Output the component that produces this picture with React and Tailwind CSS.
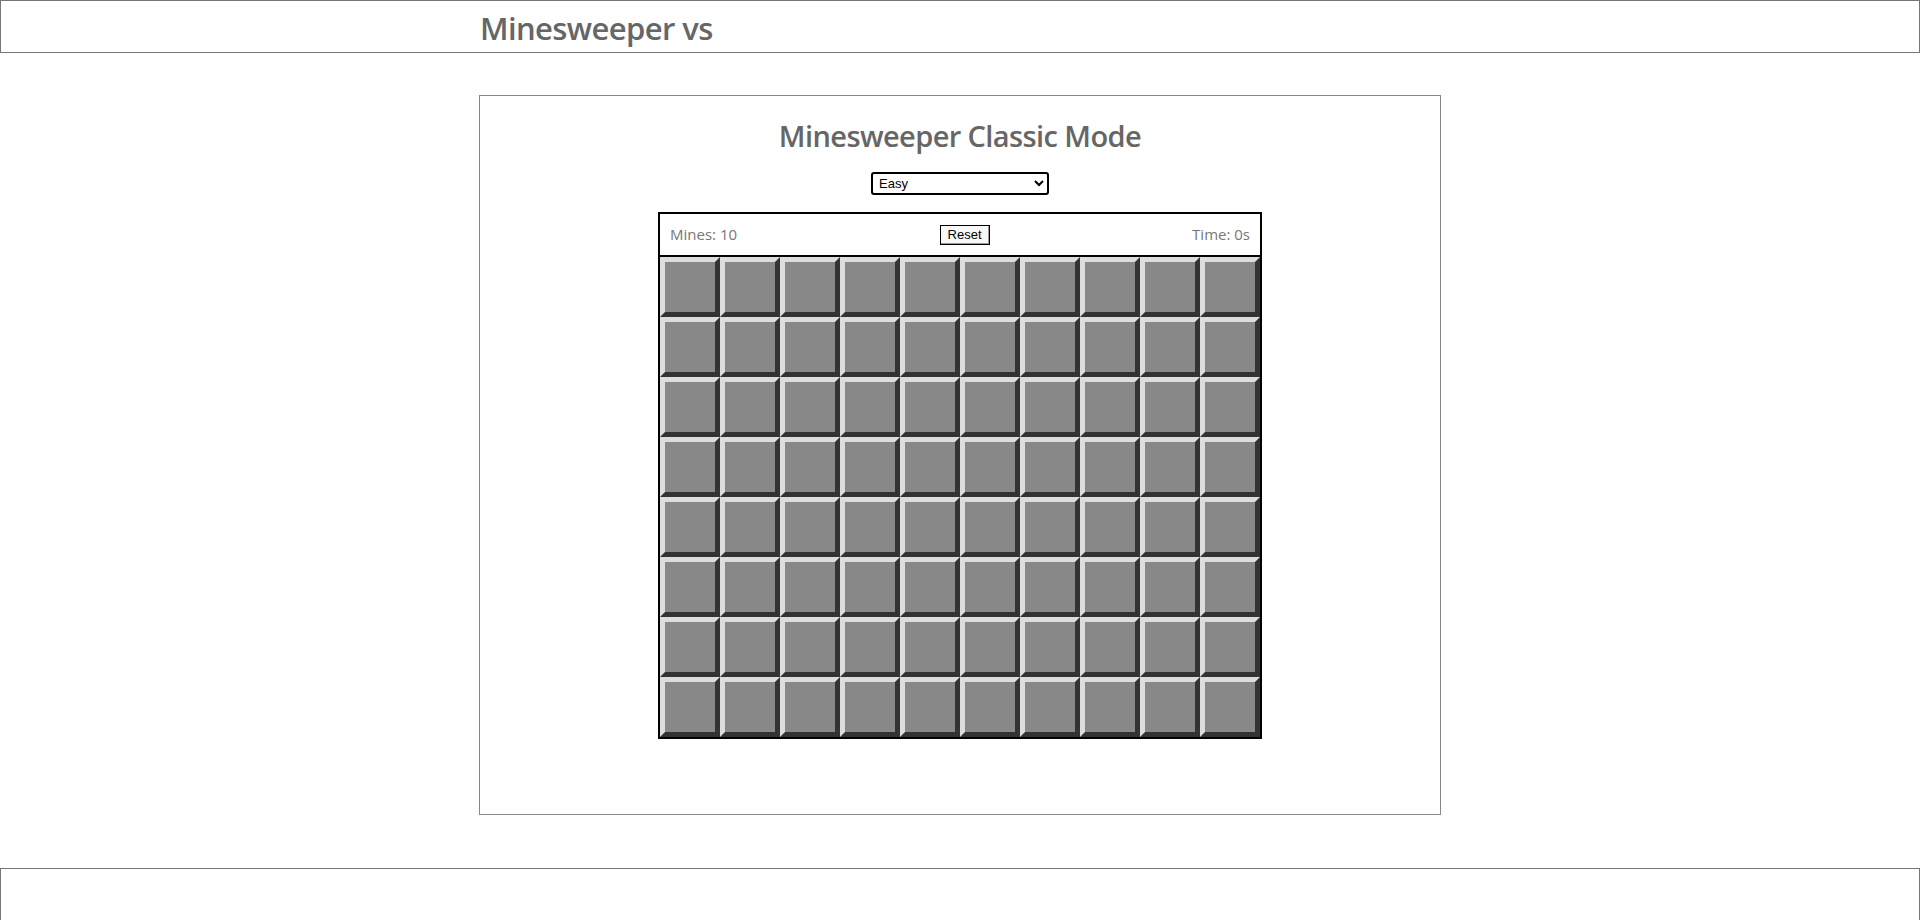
const ROWS = 8;
const COLS = 10;

function Cell() {
  return (
    <div className="w-[60px] h-[60px] bg-[#888888] border-[5px] border-t-[#dddddd] border-l-[#dddddd] border-r-[#333333] border-b-[#333333]" />
  );
}

export default function App() {
  const cells = Array.from({ length: ROWS * COLS });

  return (
    <div className="min-h-screen bg-white font-['Open_Sans',sans-serif]">
      {/* Header */}
      <header className="h-[53px] border border-[#777777]">
        <div className="w-[960px] mx-auto">
          <h1 className="text-[31px] leading-[54px] font-semibold text-[#666666] tracking-[-0.6px]">Minesweeper vs</h1>
        </div>
      </header>

      {/* Game card */}
      <main className="mt-[42px]">
        <div className="w-[962px] h-[720px] mx-auto border border-[#888888] pt-[20px] flex flex-col items-center">
          <h2 className="text-[29px] leading-[40px] font-semibold text-[#666666] tracking-[-0.6px]">
            Minesweeper Classic Mode
          </h2>
          <select
            defaultValue="easy"
            className="mt-[16px] w-[178px] h-[23px] border-2 border-black rounded-[3px] bg-white text-[13px] pl-[2px] text-black font-['Liberation_Sans',Arial,sans-serif]"
          >
            <option value="easy">Easy</option>
            <option value="medium">Medium</option>
            <option value="hard">Hard</option>
          </select>

          <div className="mt-[17px] border-2 border-black">
            <div className="h-[43px] border-b-2 border-black flex items-center justify-between px-[10px] text-[15px] text-[#777777]">
              <span>Mines: 10</span>
              <button className="w-[50px] h-[20px] border border-black bg-[#f8f8f8] text-[13px] text-black leading-none font-['Liberation_Sans',Arial,sans-serif] shadow-[inset_-1px_-1px_0_#999]">
                Reset
              </button>
              <span>Time: 0s</span>
            </div>
            <div className="grid grid-cols-[repeat(10,60px)]">
              {cells.map((_, i) => (
                <Cell key={i} />
              ))}
            </div>
          </div>
        </div>
      </main>

      {/* Footer */}
      <footer className="mt-[53px] h-[80px] border border-[#777777]" />
    </div>
  );
}
